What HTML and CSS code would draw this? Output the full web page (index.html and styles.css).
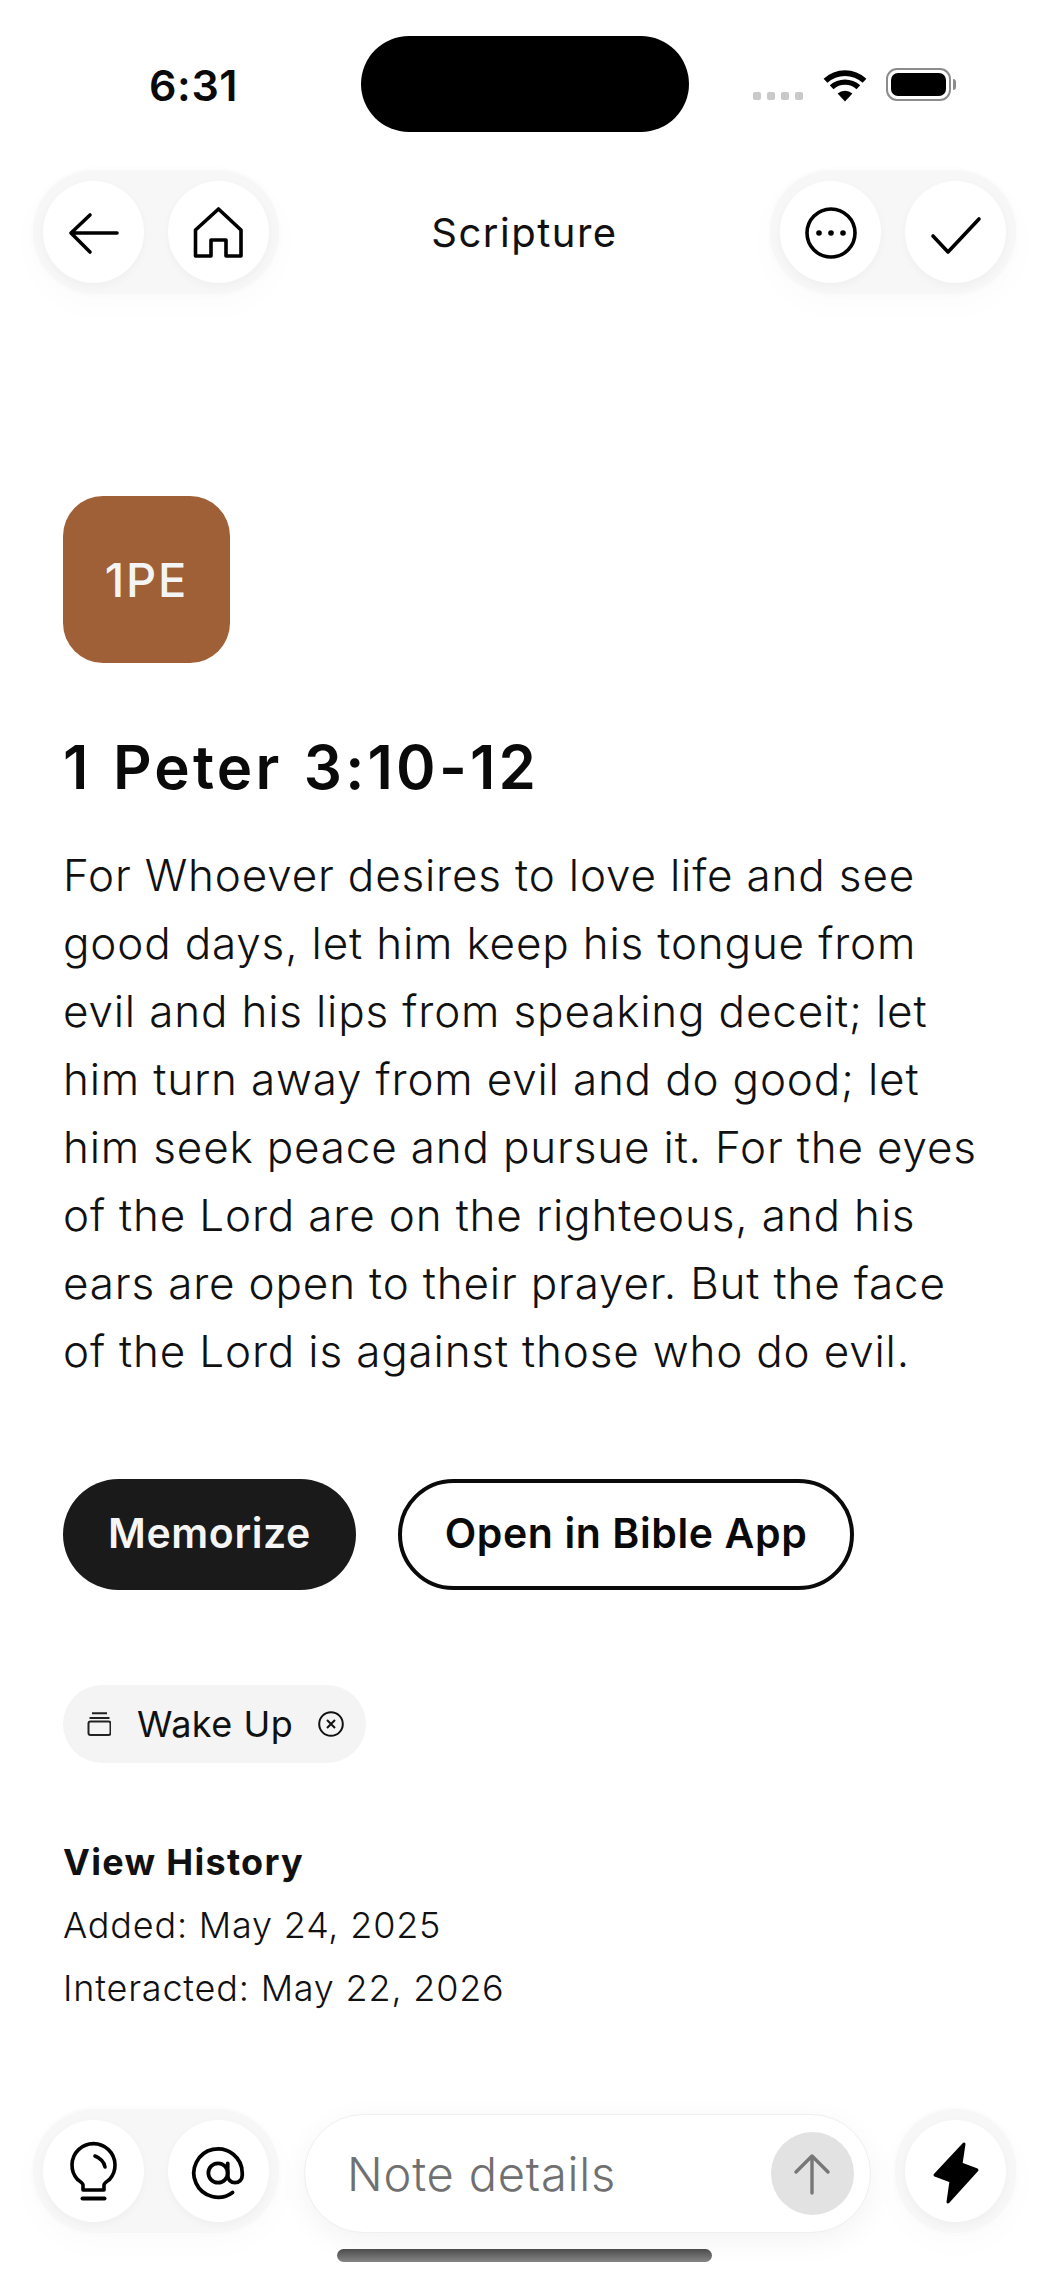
FILE: index.html
```html
<!DOCTYPE html>
<html lang="en">
<head>
<meta charset="utf-8">
<title>Scripture</title>
<link rel="stylesheet" href="styles.css">
</head>
<body>
<div class="phone">
  <div class="status">
    <span class="time">6:31</span>
    <div class="island"></div>
    <div class="status-icons">
      <div class="signal"><i></i><i></i><i></i><i></i></div>
      <svg class="wifi" width="44" height="34" viewBox="0 0 44 34"><path d="M22 33.5 14.6 25.6a11 11 0 0 1 14.8 0Z" fill="#000"/><path d="M10.5 21.3 6.8 17.3a22.5 22.5 0 0 1 30.4 0l-3.7 4a17 17 0 0 0-23 0Z" fill="#000"/><path d="M4.4 14.8.6 10.7a31.5 31.5 0 0 1 42.8 0l-3.8 4.1a26 26 0 0 0-35.2 0Z" fill="#000"/></svg>
      <div class="battery"><div class="battery-fill"></div></div>
      <div class="battery-tip"></div>
    </div>
  </div>

  <header class="topbar">
    <div class="group">
      <div class="circle"><svg class="ico" viewBox="0 0 101 101"><path d="M74 52H28M47 34 28 52l19 19"/></svg></div>
      <div class="circle"><svg class="ico" viewBox="0 0 101 101"><path d="M27.5 75V49l23-21L73 49v26H58V59H43v16Z"/></svg></div>
    </div>
    <div class="title">Scripture</div>
    <div class="group">
      <div class="circle"><svg class="ico" viewBox="0 0 101 101"><circle cx="51" cy="52" r="24"/><circle class="dot" cx="39" cy="52" r="2.8"/><circle class="dot" cx="51" cy="52" r="2.8"/><circle class="dot" cx="63" cy="52" r="2.8"/></svg></div>
      <div class="circle"><svg class="ico" viewBox="0 0 101 101"><path d="M28 55l15 16 31-33"/></svg></div>
    </div>
  </header>

  <main class="content">
    <div class="badge">1PE</div>
    <h1 class="ref">1 Peter 3:10-12</h1>
    <p class="verse">For Whoever desires to love life and see<br>good days, let him keep his tongue from<br>evil and his lips from speaking deceit; let<br>him turn away from evil and do good; let<br>him seek peace and pursue it. For the eyes<br>of the Lord are on the righteous, and his<br>ears are open to their prayer. But the face<br>of the Lord is against those who do evil.</p>
    <div class="actions">
      <div class="btn btn-dark">Memorize</div>
      <div class="btn btn-outline">Open in Bible App</div>
    </div>
    <div class="chip">
      <svg class="chip-stack" width="24" height="24" viewBox="0 0 24 24"><path d="M5 1.2h15M2.5 6h20"/><rect x="1.500" y="9.500" width="22" height="13.500" rx="2"/></svg>
      <span class="chip-label">Wake Up</span>
      <svg class="chip-x" width="26" height="26" viewBox="0 0 26 26"><circle cx="13" cy="13" r="11.800"/><path d="M9 9l8 8M17 9l-8 8"/></svg>
    </div>
    <div class="history">
      <div class="history-head">View History</div>
      <div>Added: May 24, 2025</div>
      <div>Interacted: May 22, 2026</div>
    </div>
  </main>

  <footer class="footer">
    <div class="group">
      <div class="circle"><svg class="ico" viewBox="0 0 101 101"><path d="M40 70v-5c0-2-3-3.500-5.500-5.500A21.500 21.500 0 1 1 66.500 59.500C64 61.500 61 63 61 65v5Z"/><path d="M39.500 78.500h22" stroke-width="4"/><path d="M52 36c5 2 9 6 10 11"/></svg></div>
      <div class="circle"><svg class="ico" viewBox="0 0 101 101"><g transform="translate(21 24) scale(2.42)"><circle cx="12" cy="12" r="4" stroke-width="1.550"/><path d="M16 8v5a3 3 0 0 0 6 0v-1a10 10 0 1 0-4 8" stroke-width="1.550"/></g></svg></div>
    </div>
    <div class="note">
      <span class="note-text">Note details</span>
      <div class="send"><svg class="send-ico" width="83" height="83" viewBox="0 0 83 83"><path d="M41 61V24M25 40l16-16 16 16"/></svg></div>
    </div>
    <div class="group group-single">
      <div class="circle"><svg class="ico" viewBox="0 0 101 101"><path class="bolt" d="M59 24 30 55l16 6-3 21 29-32-16-6Z"/></svg></div>
    </div>
  </footer>
  <div class="home-indicator"></div>
</div>
</body>
</html>
```

FILE: styles.css
```css
* { box-sizing: border-box; }
html, body { margin: 0; padding: 0; background: #fff; }
body { font-family: Inter, "Liberation Sans", sans-serif; color: #111; }

.phone { width: 1050px; height: 2283px; display: flex; flex-direction: column; overflow: hidden; background: #fff; }

.status { height: 170px; padding: 36px 0 0 149px; display: flex; align-items: flex-start; }
.time { width: 212px; height: 96px; line-height: 98px; font-size: 43px; font-weight: 600; color: #0a0a0a; letter-spacing: .6px; }
.island { width: 328px; height: 96px; border-radius: 48px; background: #000; }
.status-icons { margin-left: 64px; margin-top: 32px; height: 33px; display: flex; align-items: flex-start; }
.signal { display: flex; gap: 6px; margin-top: 24px; width: 70px; }
.signal i { display: block; width: 8px; height: 8px; border-radius: 2px; background: #c9c9c9; }
.wifi { display: block; width: 44px; height: 34px; }
.battery { margin-left: 19px; width: 65px; height: 33px; border-radius: 11px; border: 2px solid #8c8c8c; padding: 3px; }
.battery-fill { width: 100%; height: 100%; border-radius: 7px; background: #000; }
.battery-tip { width: 3px; height: 11px; margin: 11px 0 0 2px; border-radius: 0 3px 3px 0; background: #8c8c8c; }

.topbar { height: 124px; padding: 0 34px 0 33px; display: flex; align-items: center; }
.group { padding: 11px 10px; display: flex; gap: 24px; border-radius: 62px; background: #f7f7f7; box-shadow: 0 0 5px #f9f9f9, 0 10px 34px rgba(0,0,0,.02); }
.circle { width: 101px; height: 102px; border-radius: 50%; background: #fff; box-shadow: 0 3px 10px rgba(0,0,0,.035); }
.ico { display: block; width: 101px; height: 101px; fill: none; stroke: #000; stroke-width: 3.6; stroke-linecap: round; stroke-linejoin: round; }
.ico .dot { fill: #000; stroke: none; }
.ico .bolt { fill: #000; stroke: #000; stroke-width: 3; }
.title { flex: 1; text-align: center; font-size: 40px; font-weight: 400; letter-spacing: 1.5px; color: #111; }

.content { padding: 0 0 0 63px; }
.badge { width: 167px; height: 167px; margin-top: 202px; border-radius: 40px; background: #a06037; color: #f4f4f4; display: flex; align-items: center; justify-content: center; font-size: 47px; font-weight: 500; letter-spacing: 1.8px; }
.ref { margin: 69px 0 0; height: 70px; line-height: 70px; font-size: 60px; font-weight: 600; letter-spacing: 3.2px; word-spacing: 3px; color: #0a0a0a; }
.verse { margin: 39px 0 0; font-size: 44px; line-height: 68px; font-weight: 300; letter-spacing: .83px; color: #111; white-space: nowrap; }

.actions { margin-top: 94px; display: flex; gap: 42px; }
.btn { height: 111px; border-radius: 56px; padding-bottom: 3px; display: flex; align-items: center; justify-content: center; font-size: 41px; font-weight: 600; letter-spacing: .6px; }
.btn-dark { width: 293px; background: #1a1a1a; color: #f5f5f5; }
.btn-outline { width: 456px; background: #fff; color: #0a0a0a; border: 4px solid #0a0a0a; }

.chip { margin-top: 95px; width: 303px; height: 78px; border-radius: 39px; background: #f4f4f4; display: flex; align-items: center; padding-left: 24px; }
.chip-stack { fill: none; stroke: #222; stroke-width: 2; }
.chip-x { fill: none; stroke: #111; stroke-width: 2; }
.chip-label { margin-left: 26px; width: 181px; font-size: 36px; font-weight: 400; letter-spacing: .5px; color: #111; }

.history { margin-top: 68px; font-size: 36px; line-height: 63px; font-weight: 300; letter-spacing: .8px; color: #111; }
.history-head { font-weight: 700; letter-spacing: 1.3px; font-size: 36px; }

.footer { margin-top: auto; padding: 0 34px 0 33px; display: flex; align-items: flex-start; }
.note { width: 567px; height: 119px; margin: 5px 0 0 25px; border-radius: 60px; background: #fff; border: 1px solid #efefef; box-shadow: 0 8px 30px rgba(0,0,0,.05); display: flex; align-items: center; padding: 0 16px 0 42px; }
.note-text { flex: 1; font-size: 47px; font-weight: 300; letter-spacing: .8px; color: #707070; }
.send { width: 83px; height: 83px; border-radius: 50%; background: #e2e2e2; }
.send-ico { display: block; fill: none; stroke: #777; stroke-width: 3.4; stroke-linecap: round; stroke-linejoin: round; }
.group-single { margin-left: 24px; }
.home-indicator { width: 375px; height: 13px; margin: 16px 0 21px 337px; border-radius: 7px; background: linear-gradient(#4c4c4c, #858585); }
```
